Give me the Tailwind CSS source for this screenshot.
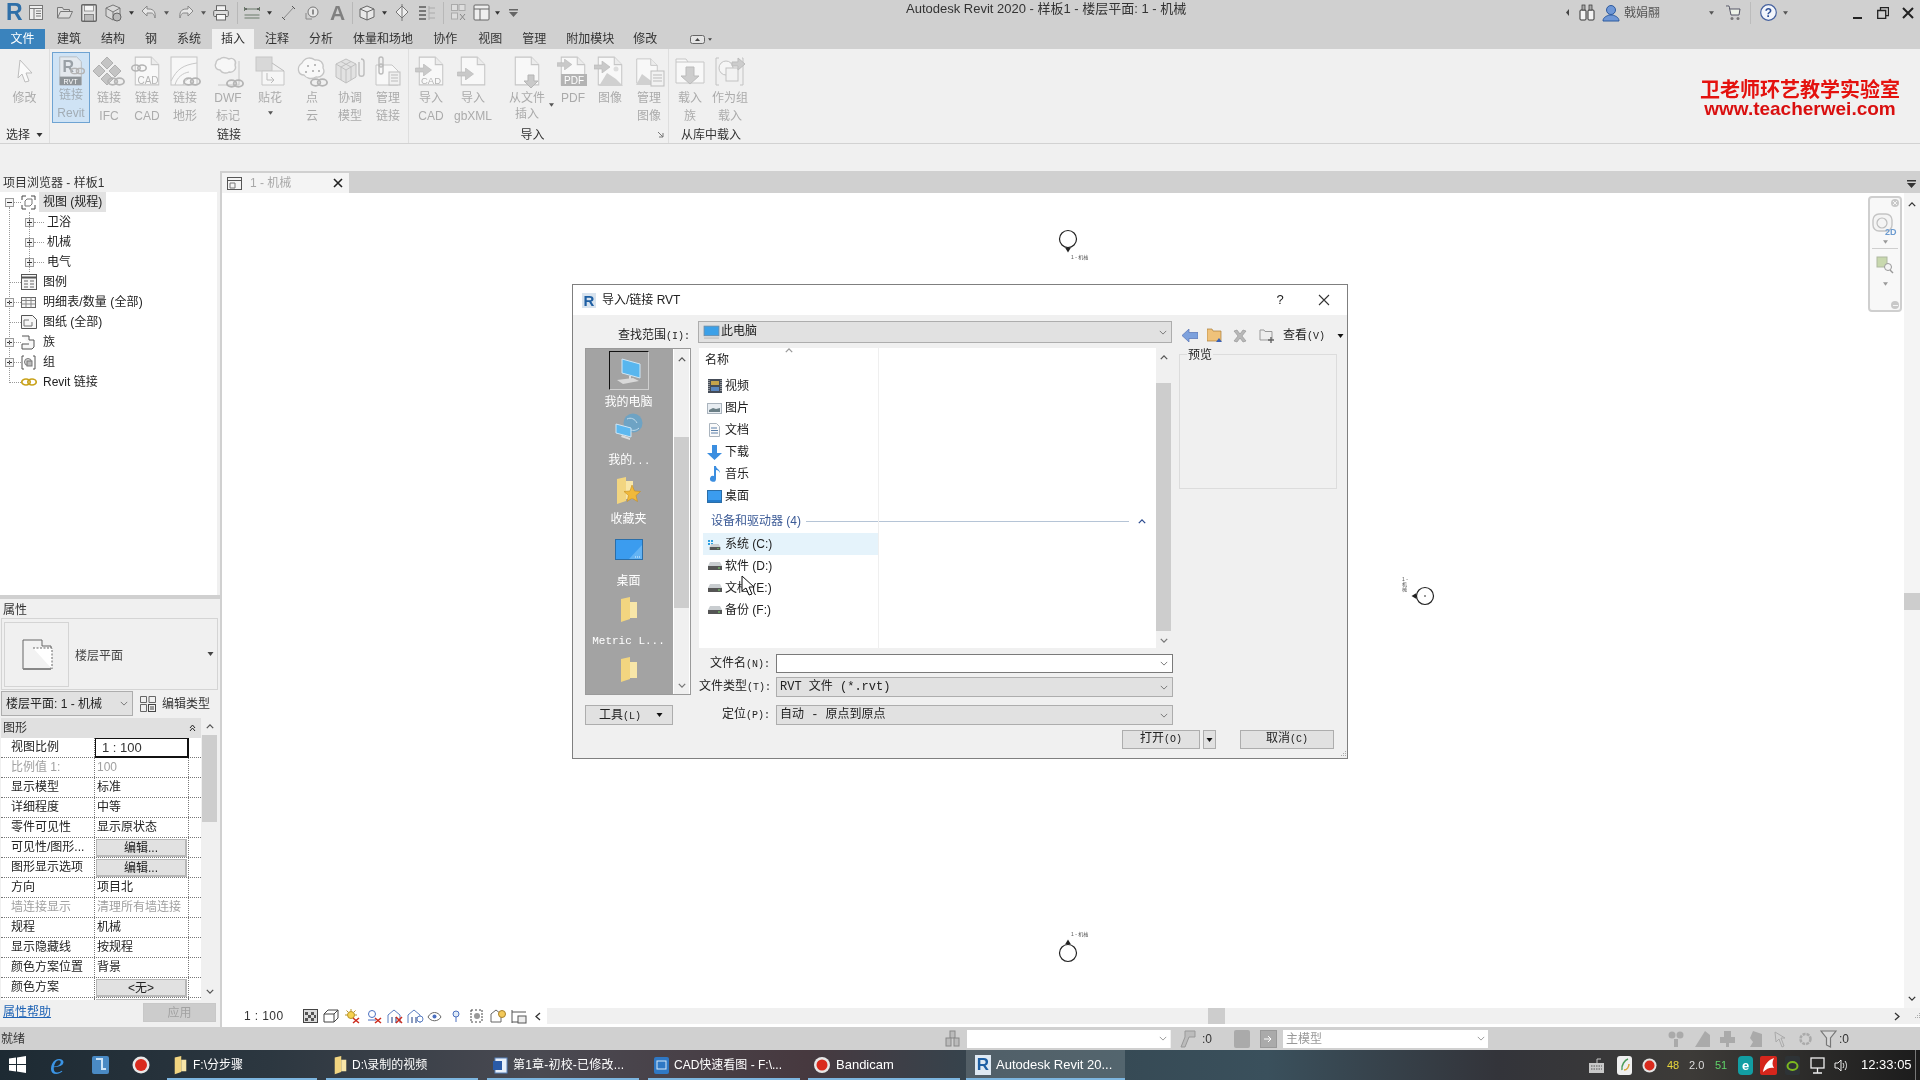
<!DOCTYPE html>
<html lang="zh-CN">
<head>
  <meta charset="UTF-8" />
  <title>Autodesk Revit 2020</title>
  <script src="https://cdn.jsdelivr.net/npm/@tailwindcss/browser@4"></script>
</head>
<body class="bg-[#d0d0d0]">

<svg class="hidden" xmlns="http://www.w3.org/2000/svg">
  <symbol id="chev" viewBox="0 0 10 6"><path d="M1 1l4 4 4-4" fill="none" stroke="currentColor" stroke-width="1.2"/></symbol>
  <symbol id="chevup" viewBox="0 0 10 6"><path d="M1 5l4-4 4 4" fill="none" stroke="currentColor" stroke-width="1.6"/></symbol>
  <symbol id="tri" viewBox="0 0 6 4"><path d="M0 0h6L3 4z" fill="currentColor"/></symbol>
  <symbol id="plus" viewBox="0 0 9 9"><rect x=".5" y=".5" width="8" height="8" fill="#f4f4f4" stroke="#9a9a9a"/><path d="M2 4.5h5M4.5 2v5" stroke="#333"/></symbol>
  <symbol id="minus" viewBox="0 0 9 9"><rect x=".5" y=".5" width="8" height="8" fill="#f4f4f4" stroke="#9a9a9a"/><path d="M2 4.5h5" stroke="#333"/></symbol>
  <symbol id="page" viewBox="0 0 30 30"><path d="M4 2h15l7 7v19H4z" fill="#f8f8f8" stroke="#c6c6c6"/><path d="M19 2v7h7" fill="#ececec" stroke="#c6c6c6"/></symbol>
  <symbol id="chain" viewBox="0 0 16 8"><ellipse cx="5" cy="4" rx="4.2" ry="3" fill="none" stroke="#b4b4b4" stroke-width="1.6"/><ellipse cx="11" cy="4" rx="4.2" ry="3" fill="none" stroke="#b4b4b4" stroke-width="1.6"/></symbol>
  <symbol id="arrowin" viewBox="0 0 16 12"><path d="M0 4h8V0l8 6-8 6V8H0z" fill="#c9c9c9" stroke="#b5b5b5" stroke-width=".6"/></symbol>
  <symbol id="folder" viewBox="0 0 18 26"><path d="M1 2l9-2v22l-9 3z" fill="#f2d580"/><path d="M10 5h7v16H10z" fill="#f8e6a8"/></symbol>
  <symbol id="disk" viewBox="0 0 14 8"><path d="M2 0h10l2 4v4H0V4z" fill="#c9cdd0"/><rect y="4" width="14" height="4" fill="#555"/><rect x="10" y="5.5" width="2" height="1" fill="#7ddc6a"/></symbol>
  <symbol id="smallpc" viewBox="0 0 16 14"><rect x="1" y="1" width="14" height="9" fill="#3ba0e8" stroke="#6b8aa5" stroke-width=".8"/><rect x="1" y="11.5" width="14" height="1.5" fill="#c5c5c5"/></symbol>
</svg>

<div class="relative w-[1920px] h-[1080px] overflow-hidden flex flex-col blur-[0.35px] text-xs text-[#222] font-['Liberation_Sans','Noto_Sans_CJK_SC',sans-serif]">

  <!-- title bar + quick access -->
  <div class="h-[29px] flex items-start bg-[#d0d0d0]">
    <div class="w-[906px] h-[25px] flex items-center text-[#7e7e7e]">
      <span class="ml-[6px] w-[14px] text-[23px] leading-[25px] font-bold text-[#2f6fa8]">R</span>
      <svg class="ml-[9px] w-[14px] h-[15px]" viewBox="0 0 14 15"><rect x=".5" y=".5" width="13" height="14" fill="#eee" stroke="#777"/><path d="M.5 3.500h13M5 3.500v11M7 6h5M7 8.500h5M7 11h5" stroke="#777" fill="none"/></svg>
      <svg class="ml-[14px] w-[16px] h-[13px]" viewBox="0 0 16 13"><path d="M.5 12V1.500h5l1 2h6v2M.5 12l3-6.500h12L12.500 12z" fill="#ddd" stroke="#777"/></svg>
      <svg class="ml-[8px] w-[16px] h-[18px]" viewBox="0 0 16 18"><rect x=".7" y=".7" width="14.600" height="16.600" rx="1" fill="#e4e4e4" stroke="#666" stroke-width="1.400"/><rect x="3.500" y="1.500" width="9" height="5.500" fill="#f5f5f5" stroke="#777" stroke-width=".7"/><rect x="3.500" y="10.500" width="9" height="6.500" fill="#bbb" stroke="#666" stroke-width=".7"/></svg>
      <svg class="ml-[8px] w-[17px] h-[18px]" viewBox="0 0 17 18"><path d="M8 1l7 3v8l-7 4-7-4V4z" fill="#d8d8d8" stroke="#777"/><path d="M1 4l7 4 7-4M8 8v8" fill="none" stroke="#777"/><circle cx="12" cy="13" r="4" fill="#bbb" stroke="#666"/></svg>
      <svg class="ml-[7px] w-[5px] h-[4px] text-[#333]"><use href="#tri"/></svg>
      <svg class="ml-[7px] w-[16px] h-[15px]" viewBox="0 0 16 15"><path d="M6 1L1 6l5 5V8h4c2 0 3 1 4 5 1-5-1-9-6-9H6z" fill="#e6e6e6" stroke="#888"/></svg>
      <svg class="ml-[7px] w-[5px] h-[4px] text-[#555]"><use href="#tri"/></svg>
      <svg class="ml-[9px] w-[16px] h-[15px]" viewBox="0 0 16 15"><path d="M10 1l5 5-5 5V8H6c-2 0-3 1-4 5-1-5 1-9 6-9h2z" fill="#e6e6e6" stroke="#888"/></svg>
      <svg class="ml-[7px] w-[5px] h-[4px] text-[#555]"><use href="#tri"/></svg>
      <svg class="ml-[7px] w-[16px] h-[16px]" viewBox="0 0 16 16"><rect x="3.500" y=".7" width="9" height="5" fill="#f2f2f2" stroke="#666"/><rect x=".7" y="5.500" width="14.600" height="6" rx="1" fill="#dedede" stroke="#666"/><rect x="3.500" y="9.500" width="9" height="5.500" fill="#f6f6f6" stroke="#666"/></svg>
      <span class="ml-[8px] w-px h-[22px] bg-[#b8b8b8]"></span>
      <svg class="ml-[6px] w-[16px] h-[13px]" viewBox="0 0 16 13"><path d="M.5 1v4M15.500 1v4M.5 3h15M.5 9h15M.5 12h15" stroke="#6a7a6a" fill="none"/><path d="M3 3l-2 0M13 3h2" stroke="#333"/></svg>
      <svg class="ml-[7px] w-[5px] h-[4px] text-[#333]"><use href="#tri"/></svg>
      <svg class="ml-[9px] w-[15px] h-[16px]" viewBox="0 0 15 16"><path d="M2 14L13 2" stroke="#888"/><path d="M1 12l3 3M11 1l3 3" stroke="#555"/></svg>
      <svg class="ml-[9px] w-[14px] h-[14px]" viewBox="0 0 14 14"><path d="M1 13V7M1 13h6" stroke="#888" fill="none"/><circle cx="8" cy="6" r="5" fill="#e8e8e8" stroke="#777"/><path d="M8 3.500v5" stroke="#333"/></svg>
      <span class="ml-[11px] w-[12px] text-[21px] leading-[25px] font-bold text-[#808080]">A</span>
      <span class="ml-[10px] w-px h-[22px] bg-[#b8b8b8]"></span>
      <svg class="ml-[6px] w-[16px] h-[16px]" viewBox="0 0 16 16"><path d="M8 1l7 3v8l-7 3-7-3V4z" fill="#e8e8e8" stroke="#666"/><path d="M1 4l7 3 7-3M8 7v8" fill="none" stroke="#666"/></svg>
      <svg class="ml-[7px] w-[5px] h-[4px] text-[#333]"><use href="#tri"/></svg>
      <svg class="ml-[8px] w-[14px] h-[17px]" viewBox="0 0 14 17"><path d="M7 2l6 6-6 6-6-6z" fill="#eee" stroke="#777"/><path d="M7 0v17" stroke="#777"/></svg>
      <svg class="ml-[9px] w-[18px] h-[16px]" viewBox="0 0 18 16"><path d="M1 2h7M1 6h7M1 10h7M1 14h7" stroke="#777" stroke-width="2"/><path d="M11 1v14M11 3h6M11 8h6M11 13h6" stroke="#aaa" fill="none"/></svg>
      <span class="ml-[7px] w-px h-[22px] bg-[#b8b8b8]"></span>
      <svg class="ml-[7px] w-[15px] h-[17px]" viewBox="0 0 15 17"><rect x=".5" y=".5" width="6" height="6" fill="#ddd" stroke="#aaa"/><rect x="8" y=".5" width="6" height="6" fill="#ddd" stroke="#aaa"/><rect x=".5" y="9" width="6" height="6" fill="#ddd" stroke="#aaa"/><path d="M9 10l5 6M14 10l-5 6" stroke="#888"/></svg>
      <svg class="ml-[7px] w-[17px] h-[17px]" viewBox="0 0 17 17"><rect x="1" y="1" width="15" height="15" rx="1" fill="#eee" stroke="#666"/><path d="M1 5h15M7 5v11" stroke="#666"/></svg>
      <svg class="ml-[5px] w-[5px] h-[4px] text-[#333]"><use href="#tri"/></svg>
      <svg class="ml-[9px] w-[9px] h-[8px] text-[#666]" viewBox="0 0 9 8"><path d="M0 0h9v1.500H0zM0 3h9L4.500 8z" fill="currentColor"/></svg>
    </div>
    <span class="w-[272px] text-[13px] leading-[17px] whitespace-nowrap text-[#333]">Autodesk Revit 2020 - 样板1 - 楼层平面: 1 - 机械</span>
    <div class="h-[25px] flex items-center">
      <svg class="ml-[388px] w-[3px] h-[7px] text-[#444]" viewBox="0 0 3 7"><path d="M3 0v7L0 3.500z" fill="currentColor"/></svg>
      <svg class="ml-[10px] w-[16px] h-[17px]" viewBox="0 0 16 17"><rect x="1" y="6" width="6" height="10" rx="1" fill="#f4f4f4" stroke="#333"/><rect x="9" y="6" width="6" height="10" rx="1" fill="#f4f4f4" stroke="#333"/><rect x="3" y="1" width="3" height="5" fill="#aaa" stroke="#333" stroke-width=".7"/><rect x="10" y="1" width="3" height="5" fill="#aaa" stroke="#333" stroke-width=".7"/></svg>
      <svg class="ml-[7px] w-[18px] h-[18px]" viewBox="0 0 18 18"><circle cx="9" cy="6" r="4.500" fill="#6f97d6" stroke="#2d5a9e"/><path d="M1 17c0-4 4-5 6-6h4c2 1 6 2 6 6z" fill="#6f97d6" stroke="#2d5a9e"/></svg>
      <span class="ml-[4px] w-[36px] whitespace-nowrap text-[#555]">戟娟翮</span>
      <svg class="ml-[49px] w-[5px] h-[4px] text-[#555]"><use href="#tri"/></svg>
      <svg class="ml-[11px] w-[16px] h-[16px]" viewBox="0 0 16 16"><path d="M1 1h3l2 9h8l1-6H5" fill="#eef3e8" stroke="#556"/><circle cx="7" cy="13.500" r="1.500" fill="#777"/><circle cx="13" cy="13.500" r="1.500" fill="#777"/></svg>
      <span class="ml-[9px] w-px h-[22px] bg-[#bcbcbc]"></span>
      <svg class="ml-[9px] w-[17px] h-[17px]" viewBox="0 0 17 17"><circle cx="8.500" cy="8.500" r="7.800" fill="#f2f5fb" stroke="#44609e" stroke-width="1.200"/><text x="8.500" y="12.800" text-anchor="middle" font-size="12" font-weight="700" fill="#2d4f95" font-family="Liberation Sans">?</text></svg>
      <svg class="ml-[6px] w-[5px] h-[4px] text-[#555]"><use href="#tri"/></svg>
      <span class="ml-[65px] mt-[10px] w-[9px] h-[2px] bg-[#222]"></span>
      <svg class="ml-[15px] w-[12px] h-[12px]" viewBox="0 0 12 12"><path d="M.7 3.500h8v8h-8zM3.500 3.500V.7h8v8h-2.500" fill="none" stroke="#222" stroke-width="1.300"/></svg>
      <svg class="ml-[13px] w-[12px] h-[12px]" viewBox="0 0 12 12"><path d="M1 1l10 10M11 1L1 11" stroke="#222" stroke-width="2"/></svg>
    </div>
  </div>

  <!-- ribbon tabs -->
  <div class="h-[20px] flex items-stretch leading-[20px] bg-[#d0d0d0] whitespace-nowrap text-[#333]">
    <span class="w-[45px] text-center text-white bg-[#3a83bd]">文件</span>
    <span class="ml-[12px]">建筑</span>
    <span class="ml-[20px]">结构</span>
    <span class="ml-[20px]">钢</span>
    <span class="ml-[20px]">系统</span>
    <span class="ml-[11px] px-[9px] bg-[#f0f0f0]">插入</span>
    <span class="ml-[11px]">注释</span>
    <span class="ml-[20px]">分析</span>
    <span class="ml-[20px]">体量和场地</span>
    <span class="ml-[20px]">协作</span>
    <span class="ml-[21px]">视图</span>
    <span class="ml-[20px]">管理</span>
    <span class="ml-[20px]">附加模块</span>
    <span class="ml-[19px]">修改</span>
    <span class="ml-[33px] flex items-center">
      <svg class="w-[15px] h-[9px]" viewBox="0 0 15 9"><rect x=".5" y=".5" width="14" height="8" rx="2" fill="#e4e4e4" stroke="#666"/><path d="M5 6l2.500-3L10 6z" fill="#444"/></svg>
      <svg class="ml-[3px] w-[4px] h-[3px] text-[#444]"><use href="#tri"/></svg>
    </span>
  </div>

  <!-- ribbon panels -->
  <div class="relative h-[95px] flex bg-[#f0f0f0] border-b border-[#d2d2d2] text-[#ababab]">

    <section class="w-[50px] h-[94px] flex flex-col border-r border-[#dedede]">
      <div class="h-[78px] pt-[3px] flex">
        <div class="w-[50px] flex flex-col items-center leading-[18px]">
          <svg class="mt-[3px] h-[34px] w-[30px]" viewBox="0 0 30 30"><path d="M10 3l12 13-6 0 3 8-4 1-3-8-4 4z" fill="#fafafa" stroke="#bdbdbd"/></svg>
          <span>修改</span>
        </div>
      </div>
      <div class="h-[16px] leading-[16px] pl-[6px] flex items-center text-[#333]">选择<svg class="ml-[6px] w-[7px] h-[4px] text-[#333]"><use href="#tri"/></svg></div>
    </section>

    <section class="w-[359px] h-[94px] flex flex-col border-r border-[#dedede]">
      <div class="h-[78px] pt-[3px] flex pl-[2px]">
        <div class="w-[38px] h-[71px] flex flex-col items-center leading-[18px] bg-[#cfe3f5] border border-[#6ea3d2] text-[#a3adb5]">
          <svg class="mt-[2px] w-[30px] h-[33px]" viewBox="0 0 30 33"><path d="M3 2h18l5 5v25H3z" fill="#e4e9ee" stroke="#b5bcc2"/><text x="6" y="18" font-size="17" font-weight="700" fill="#9aa1a7" font-family="Liberation Sans">R</text><rect x="3" y="23" width="23" height="9" fill="#8e9498"/><text x="14.500" y="30.500" text-anchor="middle" font-size="7.500" fill="#fff" font-family="Liberation Sans">RVT</text><use href="#chain" x="14" y="13" width="16" height="8"/></svg>
          <span>链接</span><span>Revit</span>
        </div>
        <div class="w-[38px] flex flex-col items-center leading-[18px]">
          <svg class="mt-[3px] w-[32px] h-[34px]" viewBox="0 0 32 34"><path d="M14 2l6 6-6 6-6-6zM6 10l6 6-6 6-6-6zM22 10l6 6-6 6-6-6zM14 18l6 6-6 6-6-6z" fill="#c4c4c4" stroke="#b0b0b0"/><use href="#chain" x="14" y="22" width="18" height="9"/></svg>
          <span>链接</span><span>IFC</span>
        </div>
        <div class="w-[38px] flex flex-col items-center leading-[18px]">
          <svg class="mt-[3px] w-[32px] h-[34px]" viewBox="0 0 32 34"><use href="#page" width="32" height="32"/><text x="17" y="29" text-anchor="middle" font-size="10" fill="#b4b4b4" font-family="Liberation Sans">CAD</text><use href="#chain" x="0" y="9" width="16" height="8"/></svg>
          <span>链接</span><span>CAD</span>
        </div>
        <div class="w-[38px] flex flex-col items-center leading-[18px]">
          <svg class="mt-[3px] w-[32px] h-[34px]" viewBox="0 0 32 34"><rect x="2" y="2" width="26" height="28" fill="#f7f7f7" stroke="#c4c4c4"/><path d="M2 26C8 14 14 10 28 8M6 30c2-8 8-12 14-13M14 30c1-4 4-6 8-7" fill="none" stroke="#c8c8c8"/><use href="#chain" x="14" y="22" width="18" height="9"/></svg>
          <span>链接</span><span>地形</span>
        </div>
        <div class="w-[48px] flex flex-col items-center leading-[18px]">
          <svg class="mt-[3px] w-[32px] h-[34px]" viewBox="0 0 32 34"><path d="M8 4c3-3 7-1 9 0 4-2 8 2 6 6 2 4-2 8-6 7-3 2-7 1-9-2-4 0-6-4-4-7 0-2 2-4 4-4z" fill="#f7f7f7" stroke="#c6c6c6" stroke-width="1.400"/><path d="M27 6v24H6" fill="none" stroke="#c6c6c6"/><use href="#chain" x="14" y="24" width="18" height="9"/></svg>
          <span>DWF</span><span>标记</span>
        </div>
        <div class="w-[36px] flex flex-col items-center leading-[18px]">
          <svg class="mt-[3px] w-[32px] h-[34px]" viewBox="0 0 32 34"><rect x="2" y="2" width="16" height="14" fill="#d8d8d8" stroke="#c6c6c6"/><path d="M8 16h22v14H8z" fill="#f6f6f6" stroke="#c6c6c6"/><path d="M18 8l12 8M13 18v7h7m-3-3l3 3-3 3" fill="none" stroke="#bbb"/></svg>
          <span>贴花</span>
          <svg class="mt-[4px] w-[5px] h-[4px] text-[#555]"><use href="#tri"/></svg>
        </div>
        <div class="ml-[5px] w-[38px] flex flex-col items-center leading-[18px]">
          <svg class="mt-[3px] w-[32px] h-[34px]" viewBox="0 0 32 34"><path d="M6 8c3-6 9-6 13-3 5-1 9 3 8 8 3 5-2 10-7 9-5 3-10 1-12-2-6 0-8-8-2-12z" fill="#f8f8f8" stroke="#c4c4c4" stroke-width="1.300"/><path d="M11 10h2v2h-2zM18 9h2v2h-2zM9 16h2v2H9zM16 15h2v2h-2zM22 15h2v2h-2z" fill="#bbb"/><use href="#chain" x="14" y="23" width="18" height="9"/></svg>
          <span>点</span><span>云</span>
        </div>
        <div class="w-[38px] flex flex-col items-center leading-[18px]">
          <svg class="mt-[3px] w-[32px] h-[34px]" viewBox="0 0 32 34"><path d="M12 4l10 5v13l-10 6-10-6V9z" fill="#e2e2e2" stroke="#c0c0c0"/><path d="M2 9l10 6 10-6M12 15v13M7 6.500l10 5.500M17 6.500l-10 5.500M7 12v13M17 12v13" fill="none" stroke="#c0c0c0"/><path d="M27 4c3 0 3 3 3 3v12c0 3-5 3-5 0V7" fill="none" stroke="#bdbdbd" stroke-width="1.400"/></svg>
          <span>协调</span><span>模型</span>
        </div>
        <div class="w-[38px] flex flex-col items-center leading-[18px]">
          <svg class="mt-[3px] w-[32px] h-[34px]" viewBox="0 0 32 34"><path d="M4 10h16l6 6v14H4z" fill="#f8f8f8" stroke="#c6c6c6"/><rect x="7" y="2" width="4" height="10" rx="2" fill="none" stroke="#bbb" stroke-width="1.400"/><rect x="7" y="9" width="4" height="10" rx="2" fill="none" stroke="#bbb" stroke-width="1.400"/><rect x="17" y="17" width="11" height="13" fill="#f0f0f0" stroke="#bdbdbd"/><path d="M19 20h7M19 23h7M19 26h7" stroke="#bbb"/></svg>
          <span>管理</span><span>链接</span>
        </div>
      </div>
      <div class="h-[16px] leading-[16px] text-center text-[#333]">链接</div>
    </section>

    <section class="w-[260px] h-[94px] flex flex-col border-r border-[#dedede]">
      <div class="h-[78px] pt-[3px] flex pl-[3px]">
        <div class="w-[38px] flex flex-col items-center leading-[18px]">
          <svg class="mt-[3px] w-[32px] h-[34px]" viewBox="0 0 32 34"><use href="#page" width="32" height="32"/><use href="#arrowin" x="0" y="9" width="17" height="12"/><text x="16" y="29" text-anchor="middle" font-size="9.500" fill="#b4b4b4" font-family="Liberation Sans">CAD</text></svg>
          <span>导入</span><span>CAD</span>
        </div>
        <div class="w-[46px] flex flex-col items-center leading-[18px]">
          <svg class="mt-[3px] w-[32px] h-[34px]" viewBox="0 0 32 34"><use href="#page" width="32" height="32"/><use href="#arrowin" x="0" y="13" width="17" height="12"/></svg>
          <span>导入</span><span>gbXML</span>
        </div>
        <div class="ml-[10px] w-[42px] flex flex-col items-center leading-[16px] relative">
          <svg class="mt-[3px] w-[32px] h-[35px]" viewBox="0 0 32 35"><use href="#page" width="32" height="32"/><path d="M17 20h6v6h4l-7 7-7-7h4z" fill="#c9c9c9" stroke="#b5b5b5"/></svg>
          <span>从文件</span><span class="whitespace-nowrap">插入</span>
          <svg class="absolute right-[-6px] top-[51px] w-[5px] h-[4px] text-[#555]"><use href="#tri"/></svg>
        </div>
        <div class="ml-[6px] w-[38px] flex flex-col items-center leading-[18px]">
          <svg class="mt-[3px] w-[32px] h-[34px]" viewBox="0 0 32 34"><use href="#page" width="32" height="32"/><use href="#arrowin" x="0" y="4" width="15" height="11"/><rect x="4" y="19" width="26" height="12" fill="#b3b3b3"/><text x="17" y="29" text-anchor="middle" font-size="10" fill="#fff" font-family="Liberation Sans">PDF</text></svg>
          <span>PDF</span>
        </div>
        <div class="w-[36px] flex flex-col items-center leading-[18px]">
          <svg class="mt-[3px] w-[32px] h-[34px]" viewBox="0 0 32 34"><use href="#page" width="32" height="32"/><path d="M5 31l8-13 9 6 7 7z" fill="#d0d0d0"/><circle cx="22" cy="14" r="2.500" fill="#ddd"/><use href="#arrowin" x="0" y="6" width="16" height="12"/></svg>
          <span>图像</span>
        </div>
        <div class="ml-[2px] w-[38px] flex flex-col items-center leading-[18px]">
          <svg class="mt-[3px] w-[32px] h-[34px]" viewBox="0 0 32 34"><use href="#page" width="28" height="32"/><path d="M3 30l6-11 8 6 6 5z" fill="#d0d0d0"/><rect x="18" y="16" width="13" height="15" fill="#f2f2f2" stroke="#bdbdbd"/><path d="M20 20h9M20 23h9M20 26h9" stroke="#bbb"/></svg>
          <span>管理</span><span>图像</span>
        </div>
      </div>
      <div class="relative h-[16px] leading-[16px] pr-[12px] text-center text-[#333]">导入
        <svg class="absolute right-[4px] top-[4px] w-[7px] h-[7px]" viewBox="0 0 7 7"><path d="M1 1l5 5M6 2v4H2" fill="none" stroke="#777"/></svg>
      </div>
    </section>

    <section class="w-[84px] h-[94px] flex flex-col">
      <div class="h-[78px] pt-[3px] flex pl-[2px]">
        <div class="w-[38px] flex flex-col items-center leading-[18px]">
          <svg class="mt-[3px] w-[32px] h-[34px]" viewBox="0 0 32 34"><path d="M2 4h10l2 3h16v21H2z" fill="#f8f8f8" stroke="#c6c6c6"/><path d="M2 7h12" stroke="#c6c6c6"/><path d="M12 12h8v9h5l-9 8-9-8h5z" fill="#cdcdcd" stroke="#bbb"/></svg>
          <span>载入</span><span>族</span>
        </div>
        <div class="w-[42px] flex flex-col items-center leading-[18px]">
          <svg class="mt-[3px] w-[32px] h-[34px]" viewBox="0 0 32 34"><path d="M5 3H2v27h3M28 3h1v27h-3" fill="none" stroke="#c2c2c2"/><circle cx="12" cy="13" r="7" fill="#f5f5f5" stroke="#c2c2c2"/><rect x="12" y="13" width="12" height="13" fill="#f2f2f2" stroke="#c2c2c2"/><path d="M18 7h6V3l7 6-7 6v-4h-6z" fill="#ccc" stroke="#bbb"/></svg>
          <span>作为组</span><span>载入</span>
        </div>
      </div>
      <div class="h-[16px] leading-[16px] text-center text-[#333] whitespace-nowrap">从库中载入</div>
    </section>

    <!-- watermark stamped over the ribbon -->
    <div class="absolute left-[1700px] top-[30px] w-[200px] text-center text-[#e4120e] font-bold whitespace-nowrap">
      <div class="text-[20px] leading-[22px]">卫老师环艺教学实验室</div>
      <div class="text-[19px] leading-[15px] font-['Liberation_Sans',sans-serif] text-[#d90f0f]">www.teacherwei.com</div>
    </div>
  </div>

  <!-- options bar -->
  <div class="h-[27px] bg-[#f0f0f0]"></div>

  <!-- workspace -->
  <div class="h-[856px] flex bg-[#d0d0d0]">

    <!-- left dock -->
    <aside class="w-[222px] h-[856px] flex flex-col border-r-[2px] border-[#d0d0d0] bg-[#f0f0f0] pt-px">
      <div class="h-[20px] pl-[3px] leading-[22px] text-[#333]">项目浏览器 - 样板1</div>
      <div class="relative h-[403px] mr-[3px] bg-white text-[#222] whitespace-nowrap">
        <span class="absolute left-[9px] top-[15px] h-[176px] border-l border-dotted border-[#999]"></span>
        <span class="absolute left-[29px] top-[20px] h-[60px] border-l border-dotted border-[#999]"></span>

        <div class="flex items-center h-5">
          <svg class="ml-[5px] w-[9px] h-[9px]"><use href="#minus"/></svg>
          <span class="w-[7px] border-t border-dotted border-[#999]"></span>
          <svg class="w-[15px] h-[15px]" viewBox="0 0 15 15"><path d="M1 5V1h4M10 1h4v4M14 10v4h-4M5 14H1v-4" fill="none" stroke="#444"/><path d="M4 6l2-2h5v5l-2 2H4z" fill="#fff" stroke="#777"/></svg>
          <span class="ml-[3px] pl-[4px] pr-[4px] h-5 leading-5 bg-[#e2e2e2]">视图 (规程)</span>
        </div>
        <div class="flex items-center h-5">
          <svg class="ml-[25px] w-[9px] h-[9px]"><use href="#plus"/></svg>
          <span class="w-[10px] border-t border-dotted border-[#999]"></span>
          <span class="ml-[3px]">卫浴</span>
        </div>
        <div class="flex items-center h-5">
          <svg class="ml-[25px] w-[9px] h-[9px]"><use href="#plus"/></svg>
          <span class="w-[10px] border-t border-dotted border-[#999]"></span>
          <span class="ml-[3px]">机械</span>
        </div>
        <div class="flex items-center h-5">
          <svg class="ml-[25px] w-[9px] h-[9px]"><use href="#plus"/></svg>
          <span class="w-[10px] border-t border-dotted border-[#999]"></span>
          <span class="ml-[3px]">电气</span>
        </div>
        <div class="flex items-center h-5">
          <span class="ml-[10px] w-[11px] border-t border-dotted border-[#999]"></span>
          <svg class="w-[16px] h-[16px]" viewBox="0 0 16 16"><rect x=".5" y=".5" width="15" height="15" fill="#f6f6f6" stroke="#555"/><path d="M.5 3.500h15" stroke="#555" stroke-width="2"/><path d="M3 7h4M9 7h4M3 10h4M9 10h4M3 13h4M9 13h4" stroke="#666"/></svg>
          <span class="ml-[6px]">图例</span>
        </div>
        <div class="flex items-center h-5">
          <svg class="ml-[5px] w-[9px] h-[9px]"><use href="#plus"/></svg>
          <span class="w-[7px] border-t border-dotted border-[#999]"></span>
          <svg class="w-[15px] h-[11px]" viewBox="0 0 15 11"><rect x=".5" y=".5" width="14" height="10" fill="#f6f6f6" stroke="#666"/><path d="M.5 3.500h14M.5 7h14M5 .5v10M10 .5v10" stroke="#888"/></svg>
          <span class="ml-[7px] tracking-[0.1px]">明细表/数量 (全部)</span>
        </div>
        <div class="flex items-center h-5">
          <span class="ml-[10px] w-[11px] border-t border-dotted border-[#999]"></span>
          <svg class="w-[16px] h-[14px]" viewBox="0 0 16 14"><path d="M.5 .5h11l4 4v9H.5z" fill="#f6f6f6" stroke="#555"/><path d="M3 5h5M3 5v6h8V7" fill="none" stroke="#777"/></svg>
          <span class="ml-[6px]">图纸 (全部)</span>
        </div>
        <div class="flex items-center h-5">
          <svg class="ml-[5px] w-[9px] h-[9px]"><use href="#plus"/></svg>
          <span class="w-[7px] border-t border-dotted border-[#999]"></span>
          <svg class="w-[15px] h-[15px]" viewBox="0 0 15 15"><path d="M1 1h7v4h5v7l-2 2H1V9h7" fill="#f8f8f8" stroke="#555"/></svg>
          <span class="ml-[7px]">族</span>
        </div>
        <div class="flex items-center h-5">
          <svg class="ml-[5px] w-[9px] h-[9px]"><use href="#plus"/></svg>
          <span class="w-[7px] border-t border-dotted border-[#999]"></span>
          <svg class="w-[15px] h-[15px]" viewBox="0 0 15 15"><path d="M3 1H1v13h2M12 1h2v13h-2" fill="none" stroke="#555"/><circle cx="7" cy="7" r="3.500" fill="#ddd" stroke="#777"/><rect x="6" y="6" width="5" height="5" fill="#bbb" stroke="#777"/></svg>
          <span class="ml-[7px]">组</span>
        </div>
        <div class="flex items-center h-5">
          <span class="ml-[10px] w-[11px] border-t border-dotted border-[#999]"></span>
          <svg class="w-[16px] h-[8px]" viewBox="0 0 16 8"><ellipse cx="5" cy="4" rx="4.200" ry="3" fill="none" stroke="#c9a21a" stroke-width="1.700"/><ellipse cx="11" cy="4" rx="4.200" ry="3" fill="none" stroke="#c9a21a" stroke-width="1.700"/></svg>
          <span class="ml-[6px]">Revit 链接</span>
        </div>
      </div>

      <div class="h-[4px] bg-[#d0d0d0]"></div>

      <!-- properties -->
      <div class="h-[19px] pl-[3px] leading-[22px] text-[#333]">属性</div>
      <div class="h-[72px] ml-px mr-[2px] flex items-center border border-[#d4d4d4]">
        <div class="ml-[2px] w-[65px] h-[65px] border border-[#d4d4d4] flex items-center justify-center">
          <svg class="w-[32px] h-[33px]" viewBox="0 0 32 33"><path d="M2 2h19v6h9v23H2z" fill="#f2f2f2" stroke="#666"/><path d="M12 10h19v21" fill="#fff" stroke="#666" stroke-dasharray="2 1.500"/><path d="M2 31h28" stroke="#888" stroke-width="2"/></svg>
        </div>
        <span class="ml-[6px] mt-[3px] text-[#444] whitespace-nowrap">楼层平面</span>
        <svg class="ml-[84px] w-[7px] h-[4px] text-[#444]"><use href="#tri"/></svg>
      </div>
      <div class="mt-px h-[25px] flex items-center">
        <div class="ml-px w-[132px] h-[25px] flex items-center bg-[#e1e1e1] border border-[#adadad] pl-[4px] whitespace-nowrap text-[#222]">
          楼层平面: 1 - 机械
          <svg class="ml-auto mr-[4px] w-[8px] h-[5px] text-[#777]"><use href="#chev"/></svg>
        </div>
        <svg class="ml-[7px] w-[16px] h-[16px]" viewBox="0 0 16 16"><path d="M.5 .5h6v6h-6zM9 .5h6.500v6H9zM.5 8.500h6v7h-6z" fill="none" stroke="#666"/><rect x="8.500" y="8.500" width="7" height="7" fill="#f2f2f2" stroke="#444"/><path d="M10 11h4M10 13h4" stroke="#444"/></svg>
        <span class="ml-[6px] whitespace-nowrap text-[#333]">编辑类型</span>
      </div>

      <div class="mt-[2px] flex ml-px">
        <div class="w-[200px] h-[282px] overflow-hidden whitespace-nowrap">
          <div class="h-5 flex items-center bg-[#e0e0e0] pl-[2px] text-[#333]">
            图形
            <svg class="ml-auto mr-[5px] w-[7px] h-[8px] text-[#222]" viewBox="0 0 7 8"><path d="M1 4l2.500-3L6 4M1 7l2.500-3L6 7" fill="none" stroke="currentColor"/></svg>
          </div>
          <div class="h-5 flex border-b border-dotted border-[#777] bg-white">
            <span class="w-[94px] pl-[10px] leading-[19px] border-r border-dotted border-[#777]">视图比例</span>
            <span class="w-[94px] h-5 pl-[6px] leading-[18px] border-2 border-[#111] border-t border-l text-[13px] text-[#333]">1 : 100</span>
          </div>
          <div class="h-5 flex border-b border-dotted border-[#777] bg-white text-[#a0a0a0]">
            <span class="w-[94px] pl-[10px] leading-[19px] border-r border-dotted border-[#777]">比例值 1:</span>
            <span class="w-[94px] pl-[2px] leading-[19px] border-r border-dotted border-[#777]">100</span>
          </div>
          <div class="h-5 flex border-b border-dotted border-[#777] bg-white">
            <span class="w-[94px] pl-[10px] leading-[19px] border-r border-dotted border-[#777]">显示模型</span>
            <span class="w-[94px] pl-[2px] leading-[19px] border-r border-dotted border-[#777]">标准</span>
          </div>
          <div class="h-5 flex border-b border-dotted border-[#777] bg-white">
            <span class="w-[94px] pl-[10px] leading-[19px] border-r border-dotted border-[#777]">详细程度</span>
            <span class="w-[94px] pl-[2px] leading-[19px] border-r border-dotted border-[#777]">中等</span>
          </div>
          <div class="h-5 flex border-b border-dotted border-[#777] bg-white">
            <span class="w-[94px] pl-[10px] leading-[19px] border-r border-dotted border-[#777]">零件可见性</span>
            <span class="w-[94px] pl-[2px] leading-[19px] border-r border-dotted border-[#777]">显示原状态</span>
          </div>
          <div class="h-5 flex border-b border-dotted border-[#777] bg-white">
            <span class="w-[94px] pl-[10px] leading-[19px] border-r border-dotted border-[#777]">可见性/图形...</span>
            <span class="w-[94px] px-px pt-px border-r border-dotted border-[#777]"><span class="block h-[18px] leading-[16px] text-center bg-[#e1e1e1] border-2 border-[#b8b8b8] border-t border-l">编辑...</span></span>
          </div>
          <div class="h-5 flex border-b border-dotted border-[#777] bg-white">
            <span class="w-[94px] pl-[10px] leading-[19px] border-r border-dotted border-[#777]">图形显示选项</span>
            <span class="w-[94px] px-px pt-px border-r border-dotted border-[#777]"><span class="block h-[18px] leading-[16px] text-center bg-[#e1e1e1] border-2 border-[#b8b8b8] border-t border-l">编辑...</span></span>
          </div>
          <div class="h-5 flex border-b border-dotted border-[#777] bg-white">
            <span class="w-[94px] pl-[10px] leading-[19px] border-r border-dotted border-[#777]">方向</span>
            <span class="w-[94px] pl-[2px] leading-[19px] border-r border-dotted border-[#777]">项目北</span>
          </div>
          <div class="h-5 flex border-b border-dotted border-[#777] bg-white text-[#a0a0a0]">
            <span class="w-[94px] pl-[10px] leading-[19px] border-r border-dotted border-[#777]">墙连接显示</span>
            <span class="w-[94px] pl-[2px] leading-[19px] border-r border-dotted border-[#777] overflow-hidden">清理所有墙连接</span>
          </div>
          <div class="h-5 flex border-b border-dotted border-[#777] bg-white">
            <span class="w-[94px] pl-[10px] leading-[19px] border-r border-dotted border-[#777]">规程</span>
            <span class="w-[94px] pl-[2px] leading-[19px] border-r border-dotted border-[#777]">机械</span>
          </div>
          <div class="h-5 flex border-b border-dotted border-[#777] bg-white">
            <span class="w-[94px] pl-[10px] leading-[19px] border-r border-dotted border-[#777]">显示隐藏线</span>
            <span class="w-[94px] pl-[2px] leading-[19px] border-r border-dotted border-[#777]">按规程</span>
          </div>
          <div class="h-5 flex border-b border-dotted border-[#777] bg-white">
            <span class="w-[94px] pl-[10px] leading-[19px] border-r border-dotted border-[#777]">颜色方案位置</span>
            <span class="w-[94px] pl-[2px] leading-[19px] border-r border-dotted border-[#777]">背景</span>
          </div>
          <div class="h-5 flex border-b border-dotted border-[#777] bg-white">
            <span class="w-[94px] pl-[10px] leading-[19px] border-r border-dotted border-[#777]">颜色方案</span>
            <span class="w-[94px] px-px pt-px border-r border-dotted border-[#777]"><span class="block h-[18px] leading-[16px] text-center bg-[#e1e1e1] border-2 border-[#b8b8b8] border-t border-l">&lt;无&gt;</span></span>
          </div>
          <div class="h-5 flex bg-white">
            <span class="w-[94px] border-r border-dotted border-[#777]"></span>
            <span class="w-[94px] px-px pt-px border-r border-dotted border-[#777]"><span class="block h-[18px] bg-[#e1e1e1] border border-[#b8b8b8]"></span></span>
          </div>
        </div>
        <div class="ml-px w-[15px] h-[282px] flex flex-col items-center bg-[#f0f0f0]">
          <svg class="mt-[6px] w-[8px] h-[5px] text-[#555]"><use href="#chevup"/></svg>
          <div class="mt-[6px] w-[15px] h-[87px] bg-[#cdcdcd]"></div>
          <svg class="mt-auto mb-[6px] w-[8px] h-[5px] text-[#555]" viewBox="0 0 10 6"><path d="M1 1l4 4 4-4" fill="none" stroke="currentColor" stroke-width="1.600"/></svg>
        </div>
      </div>
      <div class="h-[24px] flex items-center">
        <a class="ml-[3px] text-[#1f63b5] underline">属性帮助</a>
        <span class="ml-[92px] w-[73px] h-[19px] leading-[19px] text-center bg-[#cccccc] text-[#a2a2a2] border border-[#c8c8c8]">应用</span>
      </div>
    </aside>

    <!-- view area -->
    <main class="w-[1698px] h-[856px] flex flex-col">
      <div class="h-[22px] pt-[2px] flex bg-[#d0d0d0]">
        <div class="w-[127px] h-[20px] flex items-center bg-[#f4f4f4]">
          <svg class="ml-[5px] w-[15px] h-[13px]" viewBox="0 0 15 13"><rect x=".5" y=".5" width="14" height="12" fill="#f4f4f4" stroke="#555"/><path d="M.5 3.500h14" stroke="#555"/><path d="M3 6h5v5H3z" fill="none" stroke="#777"/></svg>
          <span class="ml-[8px] text-[#a8a8a8] whitespace-nowrap">1 - 机械</span>
          <svg class="ml-[42px] w-[10px] h-[10px]" viewBox="0 0 10 10"><path d="M1 1l8 8M9 1L1 9" stroke="#222" stroke-width="1.600"/></svg>
        </div>
        <svg class="ml-auto mr-[4px] mt-[7px] w-[9px] h-[8px] text-[#333]" viewBox="0 0 9 8"><path d="M0 0h9v1.500H0zM0 3h9L4.500 8z" fill="currentColor"/></svg>
      </div>

      <div class="h-[815px] flex">
        <div class="relative w-[1682px] h-[815px] bg-white">
          <!-- elevation markers and nav bar sit freely on the canvas -->
          <svg class="absolute left-[836px] top-[36px] w-[20px] h-[28px]" viewBox="0 0 20 28"><circle cx="10" cy="10" r="8.500" fill="#fff" stroke="#222" stroke-width="1.200"/><path d="M7 18.500l3 5 3-5z" fill="#222"/></svg>
          <span class="absolute left-[849px] top-[61px] text-[5px] leading-[6px] text-[#555] whitespace-nowrap">1 - 机械</span>
          <svg class="absolute left-[1185px] top-[393px] w-[28px] h-[20px]" viewBox="0 0 28 20"><path d="M9.500 7l-5 3 5 3z" fill="#222"/><circle cx="18" cy="10" r="8.500" fill="#fff" stroke="#222" stroke-width="1.200"/><path d="M17 10h2" stroke="#333"/></svg>
          <span class="absolute left-[1180px] top-[384px] w-[6px] text-[5px] leading-[5px] text-[#555]">1 - 机械</span>
          <svg class="absolute left-[836px] top-[742px] w-[20px] h-[28px]" viewBox="0 0 20 28"><path d="M7 9.500l3-5 3 5z" fill="#222"/><circle cx="10" cy="18" r="8.500" fill="#fff" stroke="#222" stroke-width="1.200"/></svg>
          <span class="absolute left-[849px] top-[738px] text-[5px] leading-[6px] text-[#555] whitespace-nowrap">1 - 机械</span>

          <div class="absolute right-[2px] top-[3px] w-[34px] h-[116px] flex flex-col items-center rounded-[4px] border-2 border-[#cfcfcf] bg-[#f8f8f8]">
            <div class="self-end mt-px mr-px w-[8px] h-[8px] rounded-full bg-[#c8c8c8] text-[#f4f4f4] flex items-center justify-center">
              <svg class="w-[6px] h-[6px]" viewBox="0 0 6 6"><path d="M1 1l4 4M5 1L1 5" stroke="currentColor"/></svg>
            </div>
            <svg class="mt-[6px] w-[26px] h-[23px]" viewBox="0 0 26 23"><rect x="1" y="1" width="19" height="17" rx="6" fill="#f4f4f4" stroke="#c4c4c4" stroke-width="1.400"/><circle cx="10" cy="10" r="5" fill="none" stroke="#bdbdbd" stroke-width="1.200"/><text x="13" y="22" font-size="9" font-weight="700" fill="#6c9bd0" font-family="Liberation Sans">2D</text></svg>
            <svg class="mt-[4px] w-[5px] h-[4px] text-[#9a9a9a]"><use href="#tri"/></svg>
            <span class="mt-[4px] w-[26px] h-px bg-[#cfcfcf]"></span>
            <svg class="mt-[7px] w-[18px] h-[18px]" viewBox="0 0 18 18"><rect x="1" y="1" width="10" height="10" fill="#c8d8ae" stroke="#aeb8a0"/><circle cx="12" cy="11" r="3.500" fill="#f4f4f4" stroke="#999"/><path d="M14 14l3 3" stroke="#999" stroke-width="1.400"/></svg>
            <svg class="mt-[8px] w-[5px] h-[4px] text-[#9a9a9a]"><use href="#tri"/></svg>
            <div class="self-end mt-auto mb-px mr-px w-[8px] h-[8px] rounded-full bg-[#c8c8c8] flex items-center justify-center"><span class="w-[5px] h-px bg-[#f4f4f4]"></span></div>
          </div>
        </div>
        <div class="w-[16px] h-[815px] flex flex-col items-center bg-[#f4f4f4] text-[#333]">
          <svg class="mt-[9px] w-[8px] h-[5px]"><use href="#chevup"/></svg>
          <div class="mt-[386px] w-[16px] h-[17px] bg-[#cdcdcd]"></div>
          <svg class="mt-auto mb-[7px] w-[8px] h-[5px]" viewBox="0 0 10 6"><path d="M1 1l4 4 4-4" fill="none" stroke="currentColor" stroke-width="1.600"/></svg>
        </div>
      </div>

      <!-- view control bar + horizontal scroll -->
      <div class="h-[16px] flex items-center bg-[#f0f0f0] text-[#444]">
        <div class="h-[16px] w-[326px] flex items-center bg-white">
          <span class="ml-[22px] w-[41px] text-[#333] whitespace-nowrap tracking-[0.4px]">1 : 100</span>
          <svg class="ml-[18px] w-[15px] h-[14px]" viewBox="0 0 15 14"><rect x=".5" y=".5" width="14" height="13" fill="#ddd" stroke="#444"/><path d="M2 3h3v3H2zM8 3h3v3H8zM5 6h3v3H5zM11 6h2v3h-2zM2 9h3v3H2zM8 9h3v3H8z" fill="#555"/></svg>
          <svg class="ml-[5px] w-[17px] h-[14px]" viewBox="0 0 17 14"><path d="M1 5h10v8H1zM1 5l4-4h10l-4 4M15 1v8l-4 4" fill="#fff" stroke="#444"/></svg>
          <svg class="ml-[4px] w-[17px] h-[15px]" viewBox="0 0 17 15"><circle cx="7" cy="6" r="3.500" fill="#f6d24f" stroke="#b89224"/><path d="M7 0v2M1 6h2M11 6h2M2.500 1.500l1.500 1.500M11.500 1.500L10 3" stroke="#b89224"/><path d="M9 9l6 5M15 9l-6 5" stroke="#cc2a1c" stroke-width="1.500"/></svg>
          <svg class="ml-[5px] w-[17px] h-[15px]" viewBox="0 0 17 15"><circle cx="6" cy="5" r="3.500" fill="none" stroke="#4a6fbf"/><path d="M2 11h8" stroke="#4a6fbf"/><path d="M9 9l6 5M15 9l-6 5" stroke="#cc2a1c" stroke-width="1.500"/></svg>
          <svg class="ml-[4px] w-[17px] h-[15px]" viewBox="0 0 17 15"><path d="M1 14V6l6-5 6 5v8" fill="none" stroke="#5a7ec2"/><path d="M4 8h2v6H4zM8 8h2v6H8z" fill="#8a9bc0"/><path d="M9 8l6 6M15 8l-6 6" stroke="#cc2a1c" stroke-width="1.500"/></svg>
          <svg class="ml-[3px] w-[17px] h-[15px]" viewBox="0 0 17 15"><path d="M1 14V6l6-5 6 5v8" fill="none" stroke="#5a7ec2"/><path d="M4 8h2v6H4zM8 8h2v6H8z" fill="#8a9bc0"/><circle cx="13" cy="10" r="3" fill="#fff" stroke="#5a7ec2"/></svg>
          <svg class="ml-[3px] w-[15px] h-[13px]" viewBox="0 0 15 13"><path d="M1 7c3-6 10-6 13 0-3 5-10 5-13 0z" fill="#fff" stroke="#666"/><circle cx="7.500" cy="6.500" r="2" fill="#4a6fbf"/></svg>
          <svg class="ml-[10px] w-[8px] h-[13px]" viewBox="0 0 8 13"><circle cx="4" cy="4" r="3" fill="#dfeaf7" stroke="#4a6fbf"/><path d="M4 7v5" stroke="#4a6fbf"/></svg>
          <svg class="ml-[10px] w-[17px] h-[14px]" viewBox="0 0 17 14"><path d="M1 1h2M5 1h2M9 1h2M1 13h2M5 13h2M9 13h2M1 1v12M12 1v12" stroke="#444" stroke-dasharray="2 1" fill="none"/><circle cx="7" cy="7" r="3" fill="#999"/></svg>
          <svg class="ml-[3px] w-[17px] h-[14px]" viewBox="0 0 17 14"><path d="M1 13V5l5-4 5 4v8H1z" fill="#fff" stroke="#666"/><circle cx="12" cy="5" r="3.500" fill="#f3c95a" stroke="#a8812a"/></svg>
          <svg class="ml-[4px] w-[16px] h-[15px]" viewBox="0 0 16 15"><path d="M1 1v13M1 3h14M1 13h6" stroke="#555" fill="none"/><rect x="7" y="7" width="8" height="7" fill="#eee" stroke="#555"/></svg>
          <svg class="ml-[8px] w-[6px] h-[9px] text-[#333]" viewBox="0 0 6 9"><path d="M5 1L1 4.500 5 8" fill="none" stroke="currentColor" stroke-width="1.300"/></svg>
        </div>
        <div class="ml-[661px] w-[17px] h-[16px] bg-[#cdcdcd]"></div>
        <svg class="ml-[669px] w-[6px] h-[9px] text-[#333]" viewBox="0 0 6 9"><path d="M1 1l4 3.500L1 8" fill="none" stroke="currentColor" stroke-width="1.300"/></svg>
        <svg class="ml-[14px] w-[6px] h-[6px] text-[#aaa]" viewBox="0 0 6 6"><path d="M5 0h1v1H5zM3 2h1v1H3zM5 2h1v1H5zM1 4h1v1H1zM3 4h1v1H3zM5 4h1v1H5z" fill="currentColor"/></svg>
      </div>
      <div class="h-[3px] bg-white"></div>
    </main>
  </div>

  <!-- status bar -->
  <div class="h-[23px] flex items-center bg-[#d0d0d0] text-[#333]">
    <span class="ml-px mt-px w-[24px]">就绪</span>
    <svg class="ml-[920px] w-[16px] h-[17px]" viewBox="0 0 16 17"><rect x="5" y="1" width="5" height="7" fill="#bbb" stroke="#888"/><rect x="1" y="8" width="5" height="8" fill="#bbb" stroke="#888"/><rect x="9" y="8" width="5" height="8" fill="#bbb" stroke="#888"/></svg>
    <div class="ml-[6px] w-[204px] h-[18px] flex items-center bg-white border-r border-[#f0f0f0]">
      <svg class="ml-auto mr-[3px] w-[8px] h-[5px] text-[#999]"><use href="#chev"/></svg>
    </div>
    <svg class="ml-[9px] w-[16px] h-[18px]" viewBox="0 0 16 18"><path d="M5 1h10v6H9l-4 10H1l4-10z" fill="#bcbcbc" stroke="#999"/></svg>
    <span class="ml-[6px] w-[10px] text-[#333]">:0</span>
    <span class="ml-[22px] w-[16px] h-[18px] rounded-[2px] bg-[#aaaaaa]"></span>
    <svg class="ml-[10px] w-[17px] h-[18px]" viewBox="0 0 17 18"><rect x=".5" y=".5" width="16" height="17" fill="#aaa" stroke="#999"/><path d="M4 9h7l-3-3M8 12l3-3" fill="none" stroke="#fff"/></svg>
    <div class="ml-[6px] w-[205px] h-[18px] flex items-center bg-white pl-[3px] text-[#999]">
      主模型
      <svg class="ml-auto mr-[3px] w-[8px] h-[5px] text-[#999]"><use href="#chev"/></svg>
    </div>
    <div class="ml-[179px] flex items-center text-[#aaa]">
      <svg class="w-[18px] h-[18px]" viewBox="0 0 18 18"><circle cx="5" cy="5" r="3.500" fill="currentColor"/><circle cx="13" cy="5" r="3.500" fill="currentColor"/><rect x="7" y="9" width="4" height="8" fill="currentColor"/></svg>
      <svg class="ml-[8px] w-[19px] h-[18px]" viewBox="0 0 19 18"><path d="M12 1l5 4v12H2z" fill="currentColor"/></svg>
      <svg class="ml-[7px] w-[17px] h-[18px]" viewBox="0 0 17 18"><path d="M5 1h7v6h4v6H1V7h4zM7 13h3v4H7z" fill="currentColor"/></svg>
      <svg class="ml-[11px] w-[16px] h-[18px]" viewBox="0 0 16 18"><path d="M6 1l9 3v13H3l3-5-3-4z" fill="currentColor"/></svg>
      <svg class="ml-[8px] w-[19px] h-[18px]" viewBox="0 0 19 18"><path d="M4 2l10 6-4 0 3 8-2 1-3-8-3 3z" fill="none" stroke="currentColor"/></svg>
      <svg class="ml-[9px] w-[13px] h-[14px]" viewBox="0 0 13 14"><circle cx="6.500" cy="7" r="5" fill="none" stroke="currentColor" stroke-width="2.500" stroke-dasharray="3 1"/></svg>
      <svg class="ml-[8px] w-[17px] h-[18px]" viewBox="0 0 17 18"><path d="M1 1h15l-5.500 7v9l-4-2V8z" fill="#d8d8d8" stroke="#777" stroke-width="1.200"/></svg>
      <span class="ml-[2px] text-[#333]">:0</span>
    </div>
  </div>

  <!-- taskbar -->
  <div class="relative h-[30px] flex items-stretch text-white whitespace-nowrap bg-[linear-gradient(90deg,#1d2a33_0%,#2c3740_14%,#4a4a52_28%,#47393f_42%,#33454f_52%,#3a505c_66%,#33343a_78%,#3d3b38_88%,#1c1c1c_100%)]">
    <svg class="ml-[9px] mt-[6px] w-[17px] h-[17px]" viewBox="0 0 17 17"><path d="M0 2.500L7 1.500v6.500H0zM8 1.400L17 0v8H8zM0 9h7v6.500L0 14.500zM8 9h9v8l-9-1.400z" fill="#fff"/></svg>
    <span class="ml-[24px] mt-[1px] w-[17px] text-[32px] leading-[25px] italic text-[#3b94e4] font-['Liberation_Serif',serif]">e</span>
    <svg class="ml-[25px] mt-[6px] w-[17px] h-[18px]" viewBox="0 0 17 18"><rect width="17" height="18" rx="2" fill="#4a8ac4"/><path d="M4 3h6v10h4" fill="none" stroke="#cfe5f7" stroke-width="2"/></svg>
    <svg class="ml-[23px] mt-[6px] w-[18px] h-[18px]" viewBox="0 0 18 18"><circle cx="9" cy="9" r="8.500" fill="#e8e8e8"/><circle cx="9" cy="9" r="6" fill="#d92a1d"/></svg>

    <div class="ml-[17px] w-[150px] pt-[2px] flex items-center border-b-2 border-[#7db6e0]">
      <svg class="ml-[7px] w-[13px] h-[19px]"><use href="#folder" width="13" height="19"/></svg>
      <span class="ml-[6px]">F:\分步骤</span>
    </div>
    <div class="ml-[9px] w-[152px] pt-[2px] flex items-center border-b-2 border-[#7db6e0]">
      <svg class="ml-[8px] w-[13px] h-[19px]"><use href="#folder" width="13" height="19"/></svg>
      <span class="ml-[5px]">D:\录制的视频</span>
    </div>
    <div class="ml-[9px] w-[152px] pt-[2px] flex items-center border-b-2 border-[#7db6e0]">
      <svg class="ml-[6px] w-[15px] h-[17px]" viewBox="0 0 15 17"><rect x="2" y="1" width="12" height="15" fill="#e8f0fa" stroke="#5a84bd"/><rect y="4" width="9" height="9" fill="#2a5ba8"/></svg>
      <span class="ml-[5px] tracking-[0.2px]">第1章-初校-已修改...</span>
    </div>
    <div class="ml-[9px] w-[152px] pt-[2px] flex items-center border-b-2 border-[#7db6e0]">
      <svg class="ml-[6px] w-[15px] h-[17px]" viewBox="0 0 15 17"><rect width="15" height="17" rx="2" fill="#2f78c4"/><rect x="3" y="4" width="9" height="8" fill="none" stroke="#d8e9fa"/></svg>
      <span class="ml-[5px]">CAD快速看图 - F:\...</span>
    </div>
    <div class="ml-[8px] w-[152px] pt-[2px] flex items-center border-b-2 border-[#7db6e0]">
      <svg class="ml-[6px] w-[16px] h-[18px]" viewBox="0 0 16 18"><circle cx="8" cy="9" r="8" fill="#e8e8e8"/><circle cx="8" cy="9" r="5.500" fill="#d92a1d"/></svg>
      <span class="ml-[6px] text-[13px]">Bandicam</span>
    </div>
    <div class="ml-[6px] w-[159px] pt-[2px] flex items-center bg-white/15 border-b-2 border-[#7db6e0]">
      <span class="ml-[9px] w-[16px] h-[20px] bg-[#dfe9f3] text-[#1e5fa3] text-[17px] leading-[20px] font-bold text-center">R</span>
      <span class="ml-[5px] text-[13px]">Autodesk Revit 20...</span>
    </div>

    <div class="flex items-center ml-[464px]">
      <svg class="w-[15px] h-[17px]" viewBox="0 0 15 17"><rect y="6" width="15" height="10" fill="#c8c8c8"/><path d="M2 9h11M2 12h11" stroke="#555" stroke-dasharray="1.500 1"/><path d="M8 6V2h4" fill="none" stroke="#c8c8c8"/></svg>
      <svg class="ml-[13px] w-[15px] h-[19px]" viewBox="0 0 15 19"><rect width="15" height="19" rx="3" fill="#efefef"/><path d="M5 14c-1-5 3-10 6-11" fill="none" stroke="#4c9c5a" stroke-width="1.500"/><path d="M7 14c3 0 5-3 5-6" fill="none" stroke="#d8a63a" stroke-width="1.500"/></svg>
      <svg class="ml-[10px] w-[15px] h-[19px]" viewBox="0 0 15 19"><circle cx="7.500" cy="9.500" r="7" fill="#e4e4e4"/><circle cx="7.500" cy="9.500" r="5" fill="#d92a1d"/></svg>
      <span class="ml-[10px] w-[11px] text-[#e8d63a] text-[11px]">48</span>
      <span class="ml-[11px] w-[15px] text-[#ddd] text-[11px]">2.0</span>
      <span class="ml-[11px] w-[10px] text-[#5fd46a] text-[11px]">51</span>
      <svg class="ml-[13px] w-[15px] h-[19px]" viewBox="0 0 15 19"><rect width="15" height="19" rx="4" fill="#129ea3"/><text x="7.500" y="14" text-anchor="middle" font-size="13" font-weight="700" fill="#fff" font-family="Liberation Sans">e</text></svg>
      <svg class="ml-[7px] w-[17px] h-[19px]" viewBox="0 0 17 19"><rect width="17" height="19" rx="2" fill="#d6261c"/><path d="M3 16c1-7 5-12 11-14-2 4-2 7 0 10-3-1-7 0-11 4z" fill="#fff"/></svg>
      <svg class="ml-[8px] w-[15px] h-[19px]" viewBox="0 0 15 19"><rect width="15" height="19" rx="2" fill="#2e3336"/><ellipse cx="7.500" cy="10" rx="5" ry="4" fill="none" stroke="#7db91f" stroke-width="2"/></svg>
      <svg class="ml-[10px] w-[15px] h-[17px]" viewBox="0 0 15 17"><rect x="1" y="1" width="13" height="10" fill="none" stroke="#eee" stroke-width="1.300"/><path d="M7.500 11v5M3 16h9" stroke="#eee" stroke-width="1.300"/></svg>
      <svg class="ml-[9px] w-[14px] h-[15px]" viewBox="0 0 14 15"><path d="M1 5h3l3-3v11l-3-3H1z" fill="none" stroke="#eee"/><path d="M9 5c1 2 1 3 0 5M11 3c2 3 2 6 0 9" fill="none" stroke="#eee"/></svg>
      <span class="ml-[13px] w-[47px] text-[13px]">12:33:05</span>
      <span class="ml-[7px] w-px h-[30px] bg-[#777]"></span>
    </div>
  </div>

  <!-- import dialog over the workspace -->
  <div class="absolute left-[572px] top-[284px] w-[776px] h-[475px] flex flex-col border border-[#7f7f7f] bg-[#f0f0f0] font-['Liberation_Mono','Noto_Sans_CJK_SC',monospace] text-[#222]">
    <div class="h-[30px] flex items-center bg-white font-['Liberation_Sans','Noto_Sans_CJK_SC',sans-serif]">
      <span class="ml-[9px] w-[14px] h-[15px] bg-[#d8e3ee] text-[#1e5fa3] text-[15px] leading-[15px] font-bold text-center">R</span>
      <span class="ml-[6px] w-[80px] whitespace-nowrap">导入/链接 RVT</span>
      <span class="ml-[593px] w-[10px] text-[13px] text-center">?</span>
      <svg class="ml-[33px] w-[12px] h-[12px]" viewBox="0 0 12 12"><path d="M1 1l10 10M11 1L1 11" stroke="#333" stroke-width="1.100"/></svg>
    </div>

    <!-- look-in row -->
    <div class="h-[33px] flex items-start">
      <span class="mt-[12px] ml-[45px] w-[71px] leading-[18px] whitespace-nowrap">查找范围<span class="text-[10px]">(I):</span></span>
      <div class="ml-[9px] mt-[6px] w-[474px] h-[22px] flex items-center bg-[#e1e1e1] border border-[#adadad]">
        <svg class="ml-[4px] w-[17px] h-[15px]"><use href="#smallpc" width="17" height="15"/></svg>
        <span class="ml-px">此电脑</span>
        <svg class="ml-auto mr-[4px] w-[8px] h-[5px] text-[#777]"><use href="#chev"/></svg>
      </div>
      <div class="ml-[10px] mt-[12px] h-[17px] flex items-center">
        <svg class="w-[16px] h-[13px]" viewBox="0 0 16 13"><path d="M7 0v3.500h9v6H7V13L0 6.500z" fill="#7da1dd" stroke="#5571b4" stroke-width=".7"/></svg>
        <svg class="ml-[9px] w-[15px] h-[15px]" viewBox="0 0 15 15"><path d="M0 1h5l1 2h8v10H0z" fill="#f0c27a" stroke="#a97c38" stroke-width=".7"/><path d="M9 14l3-4 3 4z" fill="#3b61b3"/></svg>
        <svg class="ml-[11px] w-[14px] h-[14px]" viewBox="0 0 14 14"><path d="M1 2l3-1 3 4 3-4 3 1-4 5 4 5-3 1-3-4-3 4-3-1 4-5z" fill="#b8b8b8" stroke="#8f8f8f" stroke-width=".6"/></svg>
        <svg class="ml-[12px] w-[16px] h-[15px]" viewBox="0 0 16 15"><path d="M1 2h4l1 1.500h7V12H1z" fill="#eee" stroke="#999"/><path d="M12 9v6M9 12h6" stroke="#666" stroke-width="1.400"/></svg>
        <span class="ml-[8px] w-[40px] whitespace-nowrap">查看<span class="text-[10px]">(V)</span></span>
        <svg class="ml-[14px] w-[7px] h-[4px] text-[#111]"><use href="#tri"/></svg>
      </div>
    </div>

    <div class="h-[377px] flex">
      <!-- places bar -->
      <div class="ml-[12px] w-[106px]">
        <div class="relative h-[347px] flex bg-white border border-[#9a9a9a] overflow-hidden">
          <div class="w-[87px] pr-[2px] h-[345px] bg-[#a3a3a3] text-center text-white overflow-hidden font-['Liberation_Sans','Noto_Sans_CJK_SC',sans-serif]">
            <div class="h-[60px] pt-[2px]">
              <div class="mx-auto w-[40px] h-[39px] border border-[#cfcfcf] border-l-[#111] border-t-[#111] flex items-center justify-center">
                <svg class="w-[30px] h-[30px]" viewBox="0 0 30 30"><path d="M8 3l18 5v14L8 17z" fill="#58b6ee" stroke="#cfe6f5"/><path d="M16 20v3" stroke="#ddd" stroke-width="2"/><path d="M3 24l16-2 6 3-16 3z" fill="#d9d9d9"/></svg>
              </div>
              <div class="leading-[24px]">我的电脑</div>
            </div>
            <div class="h-[60px] pt-[4px]">
              <div class="h-[31px] flex justify-center">
                <svg class="w-[28px] h-[29px]" viewBox="0 0 28 29"><circle cx="18" cy="10" r="9.500" fill="#6ea3c4"/><path d="M12 6c4-2 8 0 10 4M14 16c3 2 7 2 10-1" fill="none" stroke="#c2dceb"/><path d="M1 11l15 4v9L1 20z" fill="#5db8ef" stroke="#cfe6f5"/><path d="M7 22l8 3v2l-9-3z" fill="#ddd"/></svg>
              </div>
              <div class="mt-[5px] leading-[22px]">我的. . .</div>
            </div>
            <div class="h-[60px] pt-[8px]">
              <div class="h-[28px] flex justify-center">
                <svg class="w-[25px] h-[28px]" viewBox="0 0 25 28"><path d="M1 2l9-2v24l-9 3z" fill="#f2d580"/><path d="M10 4h7v18h-7z" fill="#f8e6a8"/><path d="M16 8l2.500 6 6 .5-4.500 4 1.500 6-5.500-3.300-5 3.300 1.500-6-4.500-4 6-.5z" fill="#f0b93a" stroke="#c58d20" stroke-width=".6"/></svg>
              </div>
              <div class="mt-[4px] leading-[20px]">收藏夹</div>
            </div>
            <div class="h-[60px] pt-[10px]">
              <div class="h-[21px] flex justify-center">
                <svg class="w-[28px] h-[21px]" viewBox="0 0 28 21"><rect x=".5" y=".5" width="27" height="20" fill="#3b9cef" stroke="#2b6ea8"/><path d="M14 20L27 6v14z" fill="#63b3f4"/><path d="M20 18h6" stroke="#e4f2fd" stroke-dasharray="1 1"/></svg>
              </div>
              <div class="mt-[11px] leading-[20px]">桌面</div>
            </div>
            <div class="h-[60px] pt-[8px]">
              <div class="h-[26px] flex justify-center"><svg class="w-[18px] h-[26px]"><use href="#folder" width="18" height="26"/></svg></div>
              <div class="mt-[8px] leading-[20px] text-[11px] font-['Liberation_Mono',monospace] whitespace-nowrap">Metric L...</div>
            </div>
            <div class="h-[30px] pt-[8px]">
              <div class="h-[26px] flex justify-center"><svg class="w-[18px] h-[26px]"><use href="#folder" width="18" height="26"/></svg></div>
            </div>
          </div>
          <div class="ml-px w-[15px] h-[345px] flex flex-col items-center bg-[#f0f0f0]">
            <svg class="mt-[8px] w-[8px] h-[5px] text-[#555]"><use href="#chevup"/></svg>
            <div class="mt-[75px] w-[15px] h-[171px] bg-[#cdcdcd]"></div>
            <svg class="mt-auto mb-[6px] w-[8px] h-[5px] text-[#777]" viewBox="0 0 10 6"><path d="M1 1l4 4 4-4" fill="none" stroke="currentColor" stroke-width="1.600"/></svg>
          </div>
        </div>
        <div class="mt-[10px] w-[88px] h-[20px] flex items-center bg-[#e1e1e1] border border-[#adadad]">
          <span class="ml-[13px] mt-[1px] w-[40px] whitespace-nowrap">工具<span class="text-[10px]">(L)</span></span>
          <svg class="ml-[17px] w-[7px] h-[4px] text-[#111]"><use href="#tri"/></svg>
        </div>
      </div>

      <!-- list and fields -->
      <div class="ml-[8px] w-[474px]">
        <div class="h-[300px] flex">
          <div class="relative w-[457px] h-[300px] bg-white font-['Liberation_Sans','Noto_Sans_CJK_SC',sans-serif]">
            <span class="absolute left-[179px] top-0 w-px h-[300px] bg-[#efefef]"></span>
            <div class="relative h-[27px] pl-[6px] pt-[3px] leading-[18px]">
              名称
              <svg class="absolute left-[86px] top-[0px] w-[8px] h-[5px] text-[#999]"><use href="#chevup"/></svg>
            </div>
            <div class="flex items-center h-[22px] pl-[9px]">
              <svg class="w-[14px] h-[14px]" viewBox="0 0 14 14"><rect width="14" height="14" fill="#454c57"/><rect x="3" y="2" width="8" height="4" fill="#c6a34a"/><rect x="3" y="8" width="8" height="4" fill="#5a86bf"/><path d="M1 1v12M13 1v12" stroke="#ddd" stroke-dasharray="1 1"/></svg>
              <span class="ml-[3px]">视频</span>
            </div>
            <div class="flex items-center h-[22px] pl-[8px]">
              <svg class="w-[15px] h-[11px]" viewBox="0 0 15 11"><rect x=".5" y=".5" width="14" height="10" fill="#e8edf2" stroke="#aab4be"/><path d="M2 7l4-2 3 1 4-1v4H2z" fill="#6b7f86"/></svg>
              <span class="ml-[3px]">图片</span>
            </div>
            <div class="flex items-center h-[22px] pl-[10px]">
              <svg class="w-[11px] h-[14px]" viewBox="0 0 11 14"><path d="M.5 .5h7l3 3v10H.5z" fill="#fafafa" stroke="#aab4be"/><path d="M2 5h6M2 7.500h7M2 10h7" stroke="#5a7ea8"/></svg>
              <span class="ml-[5px]">文档</span>
            </div>
            <div class="flex items-center h-[22px] pl-[8px]">
              <svg class="w-[15px] h-[15px]" viewBox="0 0 15 15"><path d="M5 0h5v8h5l-7.500 7L0 8h5z" fill="#3b8ee0"/></svg>
              <span class="ml-[3px]">下载</span>
            </div>
            <div class="flex items-center h-[22px] pl-[9px]">
              <svg class="w-[13px] h-[16px]" viewBox="0 0 13 16"><path d="M6 0h2c0 3 4 3 4 7-1-2-2-3-4-3v9a3 3 0 1 1-2-3z" fill="#3b8ee0"/></svg>
              <span class="ml-[4px]">音乐</span>
            </div>
            <div class="flex items-center h-[22px] pl-[8px]">
              <svg class="w-[15px] h-[13px]" viewBox="0 0 15 13"><rect x=".5" y=".5" width="14" height="12" fill="#3b9cef" stroke="#2b6ea8"/><path d="M1 11h13" stroke="#0f5da8"/></svg>
              <span class="ml-[3px]">桌面</span>
            </div>
            <div class="flex items-center h-[26px] pt-[2px] pl-[12px] text-[#3b5a96]">
              <span class="whitespace-nowrap">设备和驱动器 (4)</span>
              <span class="ml-[5px] w-[323px] h-px bg-[#b5c4d6]"></span>
              <svg class="ml-[9px] w-[8px] h-[5px] text-[#2c4b90]"><use href="#chevup"/></svg>
            </div>
            <div class="ml-[4px] w-[175px] h-[22px] flex items-center bg-[#e5f3fb] pl-[4px]">
              <svg class="w-[15px] h-[11px]" viewBox="0 0 15 11"><path d="M1 1h2v2H1zM4 1h2v2H4zM1 4h2v2H1zM4 4h2v2H4z" fill="#2f9fdf"/><use href="#disk" x="1" y="5" width="14" height="6"/></svg>
              <span class="ml-[3px]">系统 (C:)</span>
            </div>
            <div class="flex items-center h-[22px] pl-[9px]">
              <svg class="w-[14px] h-[8px]"><use href="#disk" width="14" height="8"/></svg>
              <span class="ml-[3px]">软件 (D:)</span>
            </div>
            <div class="flex items-center h-[22px] pl-[9px]">
              <svg class="w-[14px] h-[8px]"><use href="#disk" width="14" height="8"/></svg>
              <span class="ml-[3px]">文档 (E:)</span>
            </div>
            <div class="flex items-center h-[22px] pl-[9px]">
              <svg class="w-[14px] h-[8px]"><use href="#disk" width="14" height="8"/></svg>
              <span class="ml-[3px]">备份 (F:)</span>
            </div>
            <!-- mouse pointer caught in the capture -->
            <svg class="absolute left-[42px] top-[227px] w-[13px] h-[21px]" viewBox="0 0 13 21"><path d="M1 1v15l4-3 3 7 3-1-3-7h5z" fill="#fff" stroke="#111"/></svg>
          </div>
          <div class="w-[15px] h-[300px] flex flex-col items-center bg-[#f0f0f0]">
            <svg class="mt-[7px] w-[8px] h-[5px] text-[#555]"><use href="#chevup"/></svg>
            <div class="mt-[23px] w-[15px] h-[248px] bg-[#cdcdcd]"></div>
            <svg class="mt-auto mb-[5px] w-[8px] h-[5px] text-[#777]" viewBox="0 0 10 6"><path d="M1 1l4 4 4-4" fill="none" stroke="currentColor" stroke-width="1.600"/></svg>
          </div>
        </div>

        <div class="mt-[6px] flex items-center h-[19px]">
          <span class="w-[71px] text-right whitespace-nowrap">文件名<span class="text-[10px]">(N):</span></span>
          <div class="ml-[6px] w-[397px] h-[19px] flex items-center bg-white border border-[#7a7a7a]">
            <svg class="ml-auto mr-[4px] w-[8px] h-[5px] text-[#777]"><use href="#chev"/></svg>
          </div>
        </div>
        <div class="mt-[4px] flex items-center h-[20px]">
          <span class="w-[71px] text-right whitespace-nowrap">文件类型<span class="text-[10px]">(T):</span></span>
          <div class="ml-[6px] w-[397px] h-[20px] flex items-center bg-[#e1e1e1] border border-[#adadad] pl-[3px] whitespace-nowrap">
            RVT 文件 (*.rvt)
            <svg class="ml-auto mr-[4px] w-[8px] h-[5px] text-[#777]"><use href="#chev"/></svg>
          </div>
        </div>
        <div class="mt-[8px] flex items-center h-[20px]">
          <span class="w-[71px] text-right whitespace-nowrap">定位<span class="text-[10px]">(P):</span></span>
          <div class="ml-[6px] w-[397px] h-[20px] flex items-center bg-[#e1e1e1] border border-[#adadad] pl-[3px] whitespace-nowrap">
            自动 - 原点到原点
            <svg class="ml-auto mr-[4px] w-[8px] h-[5px] text-[#777]"><use href="#chev"/></svg>
          </div>
        </div>
      </div>

      <!-- preview -->
      <div class="relative ml-[6px] mt-[6px] w-[158px] h-[135px] border border-[#dcdcdc]">
        <span class="absolute left-[7px] top-[-7px] px-px bg-[#f0f0f0] leading-[16px]">预览</span>
      </div>
    </div>

    <div class="mt-[5px] flex items-center h-[19px]">
      <div class="ml-[549px] w-[78px] h-[19px] leading-[17px] text-center bg-[#e1e1e1] border border-[#adadad]">打开<span class="text-[10px]">(O)</span></div>
      <div class="ml-[3px] w-[13px] h-[19px] flex items-center justify-center bg-[#e1e1e1] border border-[#adadad]">
        <svg class="w-[7px] h-[4px] text-[#111]"><use href="#tri"/></svg>
      </div>
      <div class="ml-[24px] w-[94px] h-[19px] leading-[17px] text-center bg-[#e1e1e1] border border-[#adadad]">取消<span class="text-[10px]">(C)</span></div>
    </div>
    <svg class="absolute right-[1px] bottom-[1px] w-[6px] h-[6px] text-[#aaa]" viewBox="0 0 6 6"><path d="M5 0h1v1H5zM3 2h1v1H3zM5 2h1v1H5zM1 4h1v1H1zM3 4h1v1H3zM5 4h1v1H5z" fill="currentColor"/></svg>
  </div>
</div>

</body>
</html>
